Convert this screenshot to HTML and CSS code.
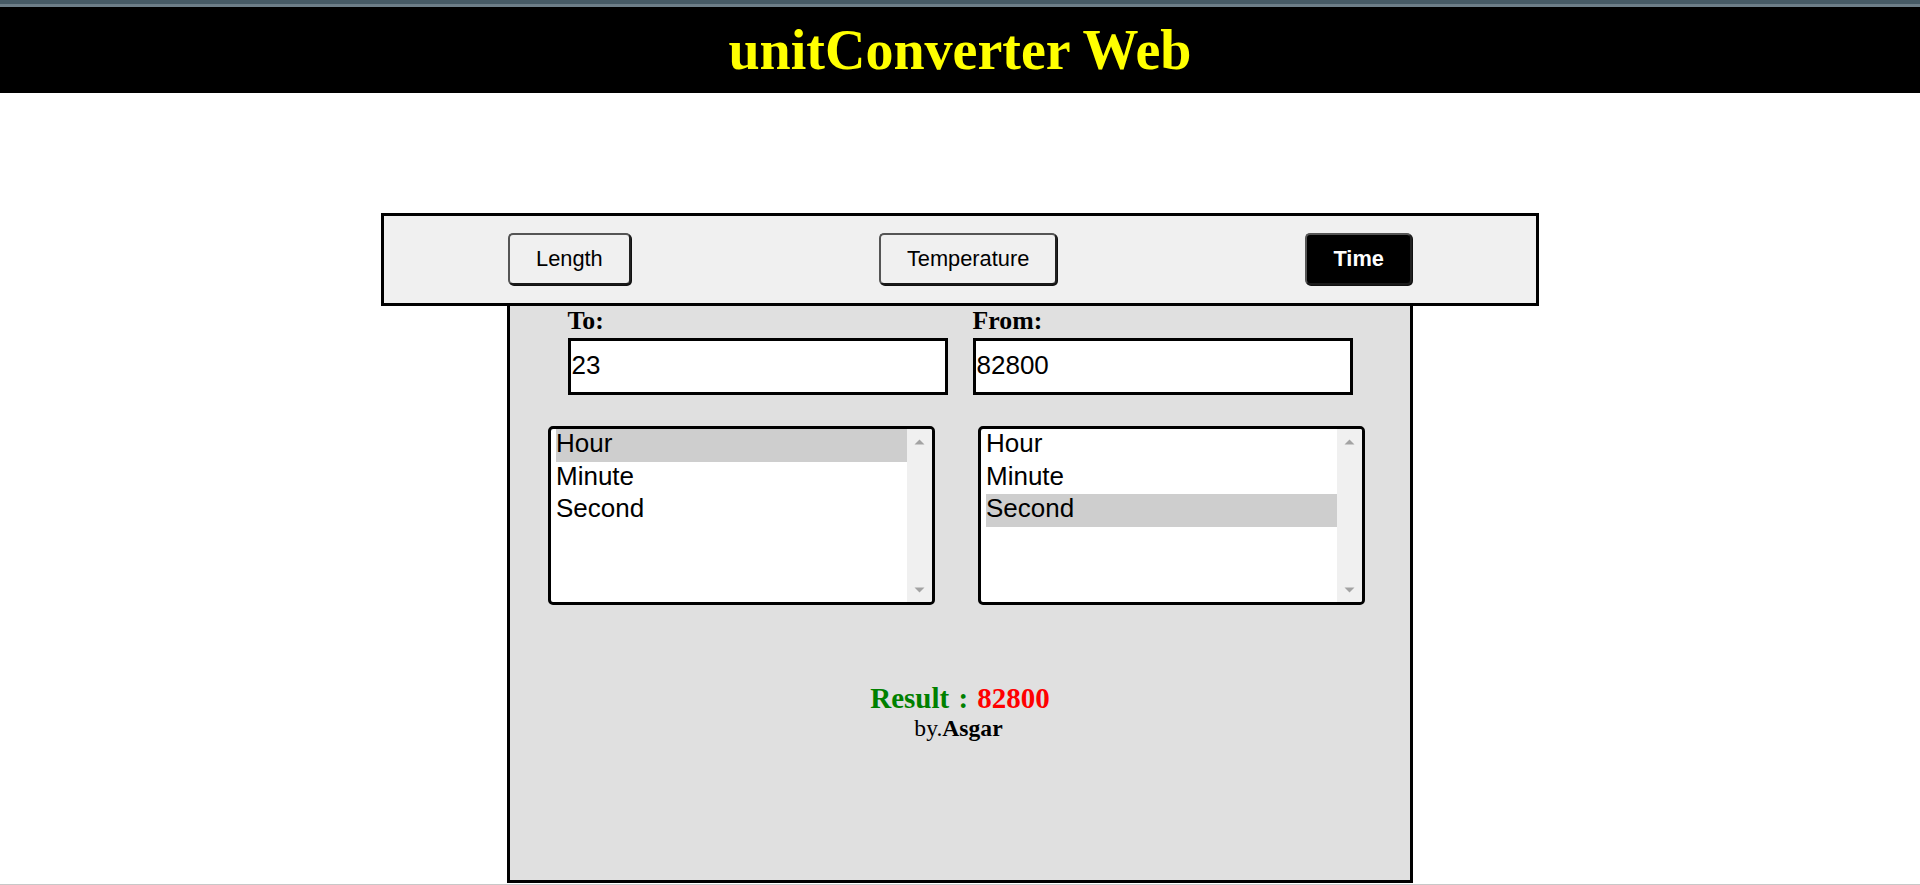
FILE: index.html
```html
<!DOCTYPE html>
<html lang="en">
<head>
<meta charset="utf-8">
<title>unitConverter Web</title>
<link rel="stylesheet" href="styles.css">
</head>
<body>
<div class="chrome-strip"></div>
<header class="site-header">
  <h1 class="site-title">unitConverter Web</h1>
</header>

<main class="converter">
  <nav class="tabs">
    <button class="tab">Length</button>
    <button class="tab">Temperature</button>
    <button class="tab tab-active">Time</button>
  </nav>

  <section class="panel">
    <div class="fields">
      <div class="field">
        <label class="field-label" for="to">To:</label>
        <input class="field-input" id="to" type="text" value="23">
      </div>
      <div class="field">
        <label class="field-label" for="from">From:</label>
        <input class="field-input" id="from" type="text" value="82800">
      </div>
    </div>

    <div class="lists">
      <div class="listbox" role="listbox">
        <div class="list-items">
          <div class="opt opt-selected">Hour</div>
          <div class="opt">Minute</div>
          <div class="opt">Second</div>
        </div>
        <div class="scrollbar">
          <span class="sb-btn"><svg width="11" height="6" viewBox="0 0 11 6"><path d="M0.5 5.5 L5.5 0.5 L10.5 5.5 Z" fill="#a3a3a3"/></svg></span>
          <span class="sb-btn"><svg width="11" height="6" viewBox="0 0 11 6"><path d="M0.5 0.5 L5.5 5.5 L10.5 0.5 Z" fill="#a3a3a3"/></svg></span>
        </div>
      </div>
      <div class="listbox" role="listbox">
        <div class="list-items">
          <div class="opt">Hour</div>
          <div class="opt">Minute</div>
          <div class="opt opt-selected">Second</div>
        </div>
        <div class="scrollbar">
          <span class="sb-btn"><svg width="11" height="6" viewBox="0 0 11 6"><path d="M0.5 5.5 L5.5 0.5 L10.5 5.5 Z" fill="#a3a3a3"/></svg></span>
          <span class="sb-btn"><svg width="11" height="6" viewBox="0 0 11 6"><path d="M0.5 0.5 L5.5 5.5 L10.5 0.5 Z" fill="#a3a3a3"/></svg></span>
        </div>
      </div>
    </div>

    <p class="result"><span class="result-label">Result :</span> <span class="result-value">82800</span></p>
    <p class="credit">by.<b>Asgar</b></p>
  </section>
</main>
<div class="viewport-edge"></div>
</body>
</html>
```

FILE: styles.css
```css
html, body {
  margin: 0;
  padding: 0;
  background: #ffffff;
}

body {
  font-family: "Liberation Serif", "Times New Roman", serif;
  color: #000;
}

.chrome-strip {
  height: 4px;
  background: #465a65;
  border-bottom: 3px solid #6d7e88;
}

.site-header {
  height: 86px;
  background: #000;
  box-sizing: border-box;
  padding-top: 11px;
  text-align: center;
}

.site-title {
  margin: 0;
  font-family: "Liberation Serif", "Times New Roman", serif;
  font-weight: bold;
  font-size: 56px;
  line-height: normal;
  color: #ffff00;
}

.converter {
  margin-top: 120px;
  display: flex;
  flex-direction: column;
  align-items: center;
}

.tabs {
  width: 1158px;
  height: 93px;
  box-sizing: border-box;
  border: 3px solid #000;
  background: #f0f0f0;
  display: flex;
  justify-content: space-around;
  align-items: center;
  padding-bottom: 1px;
  position: relative;
  z-index: 1;
}

.tab {
  font-family: "Liberation Sans", Arial, sans-serif;
  font-size: 21.8px;
  line-height: 24px;
  padding: 12px 26px;
  border: 2px solid #555;
  border-right-color: #222;
  border-bottom-color: #1a1a1a;
  border-radius: 5px;
  background: #f0f0f0;
  color: #000;
  box-shadow: 1px 1px 0 #111;
  cursor: pointer;
}

.tab-active {
  background: #000;
  color: #fff;
  font-weight: bold;
}

.panel {
  width: 906px;
  height: 580px;
  box-sizing: border-box;
  margin-top: -3px;
  border: 3px solid #000;
  background: #e0e0e0;
}

.fields {
  display: flex;
  justify-content: center;
  gap: 25px;
}

.field {
  display: flex;
  flex-direction: column;
  width: 380px;
}

.field-label {
  font-family: "Liberation Serif", "Times New Roman", serif;
  font-weight: bold;
  font-size: 25.8px;
  line-height: normal;
  margin-bottom: 2px;
}

.field-input {
  box-sizing: border-box;
  width: 380px;
  height: 57px;
  margin: 0;
  border: 3px solid #000;
  border-radius: 0;
  padding: 0 1px 2px;
  background: #fff;
  font-family: "Liberation Sans", Arial, sans-serif;
  font-size: 26px;
  color: #000;
  outline: none;
}

.lists {
  display: flex;
  justify-content: center;
  gap: 43px;
  padding-right: 7px;
  margin-top: 31px;
}

.listbox {
  box-sizing: border-box;
  width: 387px;
  height: 179px;
  border: 3px solid #000;
  border-radius: 5px;
  background: #fff;
  display: flex;
  overflow: hidden;
}

.list-items {
  flex: 1;
  padding-left: 5px;
}

.opt {
  font-family: "Liberation Sans", Arial, sans-serif;
  font-size: 26px;
  line-height: 29px;
  padding-bottom: 3.5px;
  color: #000;
}

.opt-selected {
  background: #cecece;
}

.scrollbar {
  width: 25px;
  background: #f0f0f0;
  display: flex;
  flex-direction: column;
  justify-content: space-between;
}

.sb-btn {
  height: 25px;
  display: flex;
  align-items: center;
  justify-content: center;
}

.sb-btn svg {
  display: block;
}

.result {
  margin: 77px 0 0;
  text-align: center;
  font-family: "Liberation Serif", "Times New Roman", serif;
  font-weight: bold;
  font-size: 29px;
  line-height: normal;
  word-spacing: 2px;
}

.result-label {
  color: #008000;
}

.result-value {
  color: #ff0000;
}

.credit {
  margin: 0;
  text-align: center;
  font-family: "Liberation Serif", "Times New Roman", serif;
  font-size: 23.6px;
  line-height: normal;
  padding-right: 3px;
}

.viewport-edge {
  position: fixed;
  left: 0;
  right: 0;
  bottom: 0;
  height: 1px;
  background: #c8c8c8;
}
```
